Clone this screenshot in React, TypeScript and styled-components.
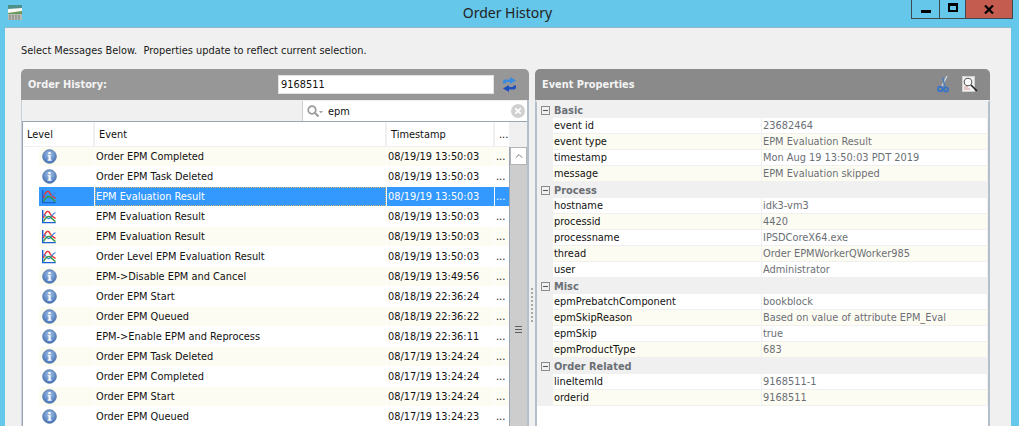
import React from 'react';
import styled, { createGlobalStyle } from 'styled-components';
import { ChevronUp } from 'lucide-react';

const GlobalStyle = createGlobalStyle`
  html, body {
    margin: 0;
    padding: 0;
    overflow: hidden;
  }
  body {
    font-family: "DejaVu Sans", "Liberation Sans", sans-serif;
    font-size: 9.8px;
    color: #111;
  }
`;

const Window = styled.div`
  width: 1019px;
  height: 426px;
  background: #65c7ea;
  display: flex;
  flex-direction: column;
  overflow: hidden;
`;

const TitleBar = styled.div`
  height: 28px;
  flex: none;
  display: grid;
  grid-template-columns: 1fr auto 1fr;
`;

const AppIconWrap = styled.div`
  padding: 5px 0 0 7px;
`;

const Title = styled.div`
  font-family: "Noto Sans", sans-serif;
  font-size: 14px;
  line-height: 26px;
  color: #222;
  padding-right: 4px;
`;

const Controls = styled.div`
  justify-self: end;
  margin-right: 6px;
  height: 18px;
  display: flex;
  border: 1px solid #3f4a50;
  border-top: none;
`;

const CtrlButton = styled.div<{ $w: number; $close?: boolean }>`
  width: ${(p) => p.$w}px;
  background: ${(p) => (p.$close ? '#c45c50' : 'transparent')};
  display: flex;
  align-items: center;
  justify-content: center;
  & + & {
    border-left: 1px solid #3f4a50;
  }
`;

const MinGlyph = styled.div`
  width: 10px;
  height: 3px;
  background: #000;
  margin-top: 5px;
`;

const MaxGlyph = styled.div`
  width: 6px;
  height: 4px;
  border: 2px solid #000;
  border-top-width: 3px;
  margin-bottom: 3px;
`;

const Client = styled.div`
  flex: 1;
  margin: 0 8px 0 5px;
  background: #f0f0f0;
  padding: 16px 21px 0 16px;
  display: flex;
  flex-direction: column;
  min-height: 0;
  box-shadow: 0 -1px 0 #8fb9cc;
`;

const Hint = styled.div`
  height: 14px;
  line-height: 14px;
  margin-bottom: 11px;
  white-space: pre;
  color: #1a1a1a;
`;

const Panels = styled.div`
  flex: 1;
  display: flex;
  min-height: 0;
`;

const Panel = styled.section<{ $w: number }>`
  width: ${(p) => p.$w}px;
  flex: none;
  display: flex;
  flex-direction: column;
  border-radius: 5px 5px 0 0;
  overflow: hidden;
`;

const PanelHeader = styled.header<{ $tone: string }>`
  height: 31px;
  flex: none;
  background: ${(p) => p.$tone};
  display: flex;
  align-items: center;
  padding: 0 12px 0 7px;
  color: #f4f4f4;
  font-weight: bold;
`;

const HeaderTitle = styled.div`
  flex: 1;
`;

const HeaderTools = styled.div`
  display: flex;
  align-items: center;
  gap: 13px;
`;

const IdInput = styled.div`
  width: 216px;
  height: 19px;
  box-sizing: border-box;
  background: #fff;
  border: 1px solid #e2e2e2;
  color: #111;
  font-weight: normal;
  line-height: 17px;
  padding-left: 2px;
  margin-right: 8px;
`;

const Splitter = styled.div`
  width: 6px;
  flex: none;
  display: flex;
  flex-direction: column;
  align-items: center;
  gap: 2px;
  padding-top: 219px;
`;

const SplitDot = styled.div`
  width: 2px;
  height: 2px;
  background: #a8a8a8;
`;

const LeftBody = styled.div`
  flex: 1;
  display: flex;
  flex-direction: column;
  min-height: 0;
  border-left: 1px solid #c6d0da;
  border-right: 2px solid #b4bfca;
`;

const FilterRow = styled.div`
  height: 21px;
  flex: none;
  display: flex;
  justify-content: flex-end;
  background: #f0f0f0;
  box-sizing: border-box;
  padding-top: 1px;
`;

const SearchBox = styled.div`
  width: 225px;
  height: 20px;
  box-sizing: border-box;
  background: #fff;
  border-left: 1px solid #ccc;
  display: flex;
  align-items: center;
  padding: 0 2px 0 4px;
  gap: 3px;
`;

const SearchText = styled.div`
  flex: 1;
  padding-left: 1px;
`;

const Grid = styled.div`
  flex: 1;
  display: flex;
  flex-direction: column;
  min-height: 0;
  border-top: 1px solid #9aa6b1;
  border-left: 1px solid #9aa6b1;
  background: #fff;
`;

const HeadRow = styled.div`
  height: 24px;
  flex: none;
  display: flex;
  background: #f0f0f0;
  border-bottom: 1px solid #f0f0f0;
`;

const HeadCell = styled.div<{ $w: number }>`
  width: ${(p) => p.$w}px;
  flex: none;
  background: #fff;
  margin-right: 2px;
  box-sizing: border-box;
  padding-left: 4px;
  line-height: 25px;
`;

const GridBody = styled.div`
  flex: 1;
  display: flex;
  min-height: 0;
`;

const Rows = styled.div`
  width: 486px;
  flex: none;
`;

const Row = styled.div<{ $odd: boolean; $selected?: boolean }>`
  height: 19px;
  margin-bottom: 1px;
  display: flex;
  padding-left: 16px;
  background: #fff;
  --cell: ${(p) => (p.$selected ? '#3399ff' : p.$odd ? '#fdfcf3' : '#ffffff')};
  color: ${(p) => (p.$selected ? '#fff' : '#111')};
`;

const LevelCell = styled.div`
  width: 55px;
  box-sizing: border-box;
  flex: none;
  margin-right: 1px;
  background: var(--cell);
  padding-left: 3px;
  display: flex;
  align-items: center;
`;

const Cell = styled.div<{ $w: number; $focus?: boolean }>`
  width: ${(p) => p.$w}px;
  flex: none;
  margin-right: 1px;
  background: var(--cell);
  box-sizing: border-box;
  padding-left: 1px;
  line-height: 19px;
  white-space: nowrap;
  overflow: hidden;
  outline: ${(p) => (p.$focus ? '1px dotted #d9b26a' : 'none')};
  outline-offset: -1px;
`;

const Scrollbar = styled.div`
  width: 17px;
  flex: none;
  background: #cdcdcd;
  border-left: 1px solid #9aa6b1;
  display: flex;
  flex-direction: column;
`;

const ScrollUp = styled.div`
  height: 18px;
  flex: none;
  background: #fff;
  border: 1px solid #b4b4b4;
  box-sizing: border-box;
  display: flex;
  align-items: center;
  justify-content: center;
  color: #555;
  margin-bottom: 1px;
`;

const ThumbGrip = styled.div`
  width: 7px;
  height: 7px;
  margin: 160px auto 0;
  background: repeating-linear-gradient(#5f5f5f 0 1px, transparent 1px 3px);
`;

const PropBody = styled.div`
  flex: 1;
  background: #fff;
  border-left: 2px solid #b4bfca;
  border-right: 2px solid #b4bfca;
  border-top: 2px solid #f0f0f0;
`;

const GroupRow = styled.div`
  height: 16px;
  display: flex;
  align-items: center;
  background: #f0f0f0;
  padding-left: 4px;
  color: #6b6f75;
  font-weight: bold;
  gap: 4px;
`;

const Toggle = styled.div`
  width: 7px;
  height: 7px;
  border: 1px solid #8c8c8c;
  display: flex;
  align-items: center;
  justify-content: center;
  &::before {
    content: '';
    width: 5px;
    height: 1px;
    background: #555;
  }
`;

const PropRow = styled.div<{ $odd: boolean }>`
  height: 16px;
  display: flex;
  background: #f0f0f0;
  padding-left: 16px;
  --prop: ${(p) => (p.$odd ? '#fdfcf3' : '#ffffff')};
`;

const PropName = styled.div`
  width: 208px;
  flex: none;
  background: var(--prop);
  line-height: 15px;
  padding-left: 1px;
  margin-right: 1px;
  border-bottom: 1px solid #f0f0f0;
  box-sizing: border-box;
`;

const PropValue = styled(PropName)`
  flex: 1;
  width: auto;
  margin-right: 1px;
  color: #6b6f75;
`;

const Info = () => (
  <svg width="15" height="15" viewBox="0 0 15 15">
    <defs>
      <radialGradient id="ig" cx="50%" cy="35%" r="65%">
        <stop offset="0%" stopColor="#a9c4ea" />
        <stop offset="100%" stopColor="#3f6fb5" />
      </radialGradient>
    </defs>
    <circle cx="7.5" cy="7.5" r="6.8" fill="url(#ig)" stroke="#5f80ad" />
    <rect x="6.4" y="3" width="2.2" height="2" fill="#fff" />
    <path d="M5.8 6.2h2.8v4.4h1v1.1H5.6v-1.1h1V7.3h-.8z" fill="#fff" />
  </svg>
);

const ChartIcon = () => (
  <svg width="14" height="15" viewBox="0 0 14 15" fill="none">
    <path d="M.7 1v12.6h13" stroke="#1a5fd0" strokeWidth="1.4" />
    <path d="M1.5 9C3.5 1.5 6.5 1 8 4.5s3.5 3.5 5.5 5" stroke="#e8302c" strokeWidth="1.4" />
    <path d="M1.5 5.5C4 5.500 5 11 7.5 9.5S11 3.500 13.500 4" stroke="#3f7fe8" strokeWidth="1.2" />
    <path d="M1.5 12.5C4 7.500 7 6.500 9 8.500s3 3.500 4.500 4" stroke="#2f9a40" strokeWidth="1.4" />
  </svg>
);

const AppIcon = () => (
  <svg width="16" height="16" viewBox="0 0 16 16">
    <rect x="1" y="0" width="14" height="15" fill="#d9e2dc" />
    <rect x="1" y="0" width="14" height="4" fill="#4f8f8a" />
    <path d="M1 4l14-1v3L1 8z" fill="#f8f8f4" />
    <path d="M1 8l14-2v3H1z" fill="#6a9a5a" />
    <rect x="1" y="9" width="14" height="6" fill="#b9bcb4" />
    <path d="M3 10v5M6 10v5M9 10v5M12 10v5" stroke="#7c7f78" />
  </svg>
);

const SyncIcon = () => (
  <svg width="15" height="15" viewBox="0 0 15 15">
    <path d="M1 6.5V4.5C1 3 2.5 2.500 4 2.500h4V0l6 3.500-6 3.500V5H5C4 5 3.500 5.500 3.500 6.500z" fill="#3a8ae0" />
    <path d="M14 8.500v2c0 1.500-1.500 2-3 2H7V15L1 11.500 7 8v2h3c1 0 1.500-.5 1.500-1.500z" fill="#1d4fc0" />
  </svg>
);

const ScissorsIcon = () => (
  <svg width="12" height="17" viewBox="0 0 12 17" fill="none">
    <path d="M10 0L4.500 11" stroke="#c8d4e2" strokeWidth="1.4" />
    <path d="M5.500 1L8 11" stroke="#4f7fb8" strokeWidth="1.4" />
    <circle cx="3.200" cy="13" r="2.300" stroke="#3b74c4" strokeWidth="1.9" />
    <circle cx="9" cy="13.500" r="2" stroke="#3b74c4" strokeWidth="1.9" />
  </svg>
);

const PreviewIcon = () => (
  <svg width="16" height="17" viewBox="0 0 16 17" fill="none">
    <rect x="0.5" y="0.5" width="12" height="15" fill="#f2f2f2" stroke="#d0d0d0" />
    <path d="M2 11h4M2 13h6" stroke="#d89a9a" />
    <circle cx="6" cy="6" r="3.8" fill="#fff" stroke="#555" strokeWidth="1.1" />
    <path d="M9 9l6 6" stroke="#222" strokeWidth="1.6" />
  </svg>
);

const SearchIcon = () => (
  <svg width="17" height="13" viewBox="0 0 17 13" fill="none">
    <circle cx="5" cy="5" r="3.8" stroke="#9a9a9a" strokeWidth="1.7" />
    <path d="M8 8l3.500 3.500" stroke="#9a9a9a" strokeWidth="2" />
    <path d="M12 6h4l-2 2.500z" fill="#a8a8a8" />
  </svg>
);

const ClearIcon = () => (
  <svg width="14" height="14" viewBox="0 0 14 14">
    <circle cx="7" cy="7" r="7" fill="#d0d0d0" />
    <path d="M4.300 4.300l5.400 5.400M9.700 4.300l-5.400 5.400" stroke="#fff" strokeWidth="1.7" />
  </svg>
);

const events: [string, string, string][] = [
  ['info', 'Order EPM Completed', '08/19/19 13:50:03'],
  ['info', 'Order EPM Task Deleted', '08/19/19 13:50:03'],
  ['chart', 'EPM Evaluation Result', '08/19/19 13:50:03'],
  ['chart', 'EPM Evaluation Result', '08/19/19 13:50:03'],
  ['chart', 'EPM Evaluation Result', '08/19/19 13:50:03'],
  ['chart', 'Order Level EPM Evaluation Result', '08/19/19 13:50:03'],
  ['info', 'EPM->Disable EPM and Cancel', '08/19/19 13:49:56'],
  ['info', 'Order EPM Start', '08/18/19 22:36:24'],
  ['info', 'Order EPM Queued', '08/18/19 22:36:22'],
  ['info', 'EPM->Enable EPM and Reprocess', '08/18/19 22:36:11'],
  ['info', 'Order EPM Task Deleted', '08/17/19 13:24:24'],
  ['info', 'Order EPM Completed', '08/17/19 13:24:24'],
  ['info', 'Order EPM Start', '08/17/19 13:24:24'],
  ['info', 'Order EPM Queued', '08/17/19 13:24:23'],
];

const properties: { group: string; items: [string, string][] }[] = [
  {
    group: 'Basic',
    items: [
      ['event id', '23682464'],
      ['event type', 'EPM Evaluation Result'],
      ['timestamp', 'Mon Aug 19 13:50:03 PDT 2019'],
      ['message', 'EPM Evaluation skipped'],
    ],
  },
  {
    group: 'Process',
    items: [
      ['hostname', 'idk3-vm3'],
      ['processid', '4420'],
      ['processname', 'IPSDCoreX64.exe'],
      ['thread', 'Order EPMWorkerQWorker985'],
      ['user', 'Administrator'],
    ],
  },
  {
    group: 'Misc',
    items: [
      ['epmPrebatchComponent', 'bookblock'],
      ['epmSkipReason', 'Based on value of attribute EPM_Eval'],
      ['epmSkip', 'true'],
      ['epmProductType', '683'],
    ],
  },
  {
    group: 'Order Related',
    items: [
      ['lineItemId', '9168511-1'],
      ['orderid', '9168511'],
    ],
  },
];

export default function App() {
  return (
    <Window>
      <GlobalStyle />
      <TitleBar>
        <AppIconWrap>
          <AppIcon />
        </AppIconWrap>
        <Title>Order History</Title>
        <Controls>
          <CtrlButton $w={27}>
            <MinGlyph />
          </CtrlButton>
          <CtrlButton $w={25}>
            <MaxGlyph />
          </CtrlButton>
          <CtrlButton $w={46} $close>
            <svg width="10" height="9" viewBox="0 0 10 9">
              <path d="M1 .5l8 8M9 .5l-8 8" stroke="#000" strokeWidth="2.2" />
            </svg>
          </CtrlButton>
        </Controls>
      </TitleBar>
      <Client>
        <Hint>Select Messages Below.  Properties update to reflect current selection.</Hint>
        <Panels>
          <Panel $w={508}>
            <PanelHeader $tone="#979797">
              <HeaderTitle>Order History:</HeaderTitle>
              <IdInput>9168511</IdInput>
              <SyncIcon />
            </PanelHeader>
            <LeftBody>
              <FilterRow>
                <SearchBox>
                  <SearchIcon />
                  <SearchText>epm</SearchText>
                  <ClearIcon />
                </SearchBox>
              </FilterRow>
              <Grid>
                <HeadRow>
                  <HeadCell $w={70}>Level</HeadCell>
                  <HeadCell $w={290}>Event</HeadCell>
                  <HeadCell $w={106}>Timestamp</HeadCell>
                  <HeadCell $w={14}>...</HeadCell>
                </HeadRow>
                <GridBody>
                  <Rows>
                    {events.map(([kind, name, time], i) => (
                      <Row key={i} $odd={i % 2 === 0} $selected={i === 2}>
                        <LevelCell>{kind === 'info' ? <Info /> : <ChartIcon />}</LevelCell>
                        <Cell $w={291} $focus={i === 2}>{name}</Cell>
                        <Cell $w={107}>{time}</Cell>
                        <Cell $w={15}>...</Cell>
                      </Row>
                    ))}
                  </Rows>
                  <Scrollbar>
                    <ScrollUp>
                      <ChevronUp size={12} strokeWidth={1.6} />
                    </ScrollUp>
                    <ThumbGrip />
                  </Scrollbar>
                </GridBody>
              </Grid>
            </LeftBody>
          </Panel>
          <Splitter>
            {Array.from({ length: 9 }).map((_, i) => (
              <SplitDot key={i} />
            ))}
          </Splitter>
          <Panel $w={455}>
            <PanelHeader $tone="#8a8a8a">
              <HeaderTitle>Event Properties</HeaderTitle>
              <HeaderTools>
                <ScissorsIcon />
                <PreviewIcon />
              </HeaderTools>
            </PanelHeader>
            <PropBody>
              {properties.map((g) => (
                <React.Fragment key={g.group}>
                  <GroupRow>
                    <Toggle />
                    {g.group}
                  </GroupRow>
                  {g.items.map(([k, v], i) => (
                    <PropRow key={k} $odd={i % 2 === 1}>
                      <PropName>{k}</PropName>
                      <PropValue>{v}</PropValue>
                    </PropRow>
                  ))}
                </React.Fragment>
              ))}
            </PropBody>
          </Panel>
        </Panels>
      </Client>
    </Window>
  );
}
